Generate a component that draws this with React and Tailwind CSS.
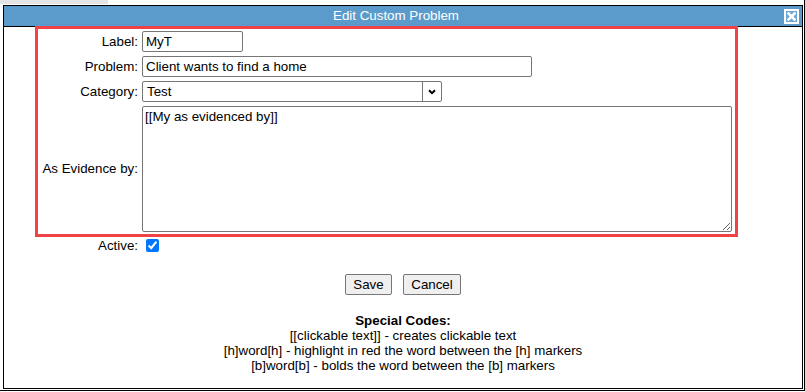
import React from "react";

function Row({ label, children, className = "" }) {
  return (
    <div className={"flex items-center " + className}>
      <div className="w-[100px] text-right whitespace-nowrap">{label}</div>
      <div className="ml-[4px] flex">{children}</div>
    </div>
  );
}

export default function App() {
  return (
    <div className="w-[805px] h-[392px] bg-white overflow-hidden text-black text-[13.33px] font-['Liberation_Sans',Arial,sans-serif]">
      <div className="w-[805px] h-[391px] border-r border-b border-black flex flex-col">
        <div className="h-[5px] flex">
          <div className="w-[108px] h-[4px] bg-[#e4e4e4]" />
        </div>
        <div className="ml-[3px] w-[800px] h-[384px] border border-black flex flex-col">
          {/* Title bar */}
          <div className="h-[21px] bg-[#5b9bcb] border-b border-black flex items-center">
            <div className="flex-1 text-center text-white pl-[4px] leading-[20px]">Edit Custom Problem</div>
            <div className="w-[15px] h-[15px] mr-[3px] border-2 border-white bg-[#6fa8d4] flex items-center justify-center">
              <svg width="9" height="9" viewBox="0 0 9 9">
                <path d="M1.5 1.5 L7.5 7.5 M7.5 1.5 L1.5 7.5" stroke="#ffffff" strokeWidth="2.6" strokeLinecap="square" />
              </svg>
            </div>
          </div>

          {/* Highlighted form area */}
          <div className="ml-[31px] w-[703px] -mt-px border-[3px] border-[#f04347] pt-[2px] pb-[2px] flex flex-col gap-[4px]">
            <Row label="Label:">
              <input
                defaultValue="MyT"
                className="w-[101px] h-[21px] border border-[#767676] rounded-[2px] px-[3px] outline-none"
              />
            </Row>
            <Row label="Problem:">
              <input
                defaultValue="Client wants to find a home"
                className="w-[390px] h-[21px] border border-[#767676] rounded-[2px] px-[3px] outline-none"
              />
            </Row>
            <Row label="Category:">
              <div className="w-[300px] h-[21px] border border-[#767676] rounded-[2px] flex">
                <div className="flex-1 pl-[4px] leading-[19px]">Test</div>
                <div className="w-[19px] border-l border-[#767676] flex items-center justify-center">
                  <svg width="8" height="6" viewBox="0 0 8 6">
                    <path d="M1 1.2 L4 4.2 L7 1.2" fill="none" stroke="#000" strokeWidth="2" />
                  </svg>
                </div>
              </div>
            </Row>
            <Row label="As Evidence by:">
              <textarea
                defaultValue="[[My as evidenced by]]"
                className="w-[590px] h-[126px] border border-[#767676] rounded-[2px] p-[2px] leading-[15px] outline-none resize"
              />
            </Row>
          </div>

          {/* Active */}
          <div className="ml-[34px] mt-[1px] h-[15px] flex items-center leading-[15px]">
            <div className="w-[100px] text-right">Active:</div>
            <input type="checkbox" defaultChecked className="ml-[8px] mt-0 mb-0 w-[13px] h-[13px]" />
          </div>

          {/* Buttons */}
          <div className="mt-[21px] flex justify-center gap-[11px]">
            <button className="w-[47px] h-[21px] bg-[#efefef] border border-[#767676] rounded-[2px] leading-[19px]">Save</button>
            <button className="w-[58px] h-[21px] bg-[#efefef] border border-[#767676] rounded-[2px] leading-[19px]">Cancel</button>
          </div>

          {/* Special codes */}
          <div className="mt-[18px] text-center leading-[15px]">
            <div className="font-bold">Special Codes:</div>
            <div>[[clickable text]] - creates clickable text</div>
            <div>[h]word[h] - highlight in red the word between the [h] markers</div>
            <div>[b]word[b] - bolds the word between the [b] markers</div>
          </div>
        </div>
      </div>
    </div>
  );
}
